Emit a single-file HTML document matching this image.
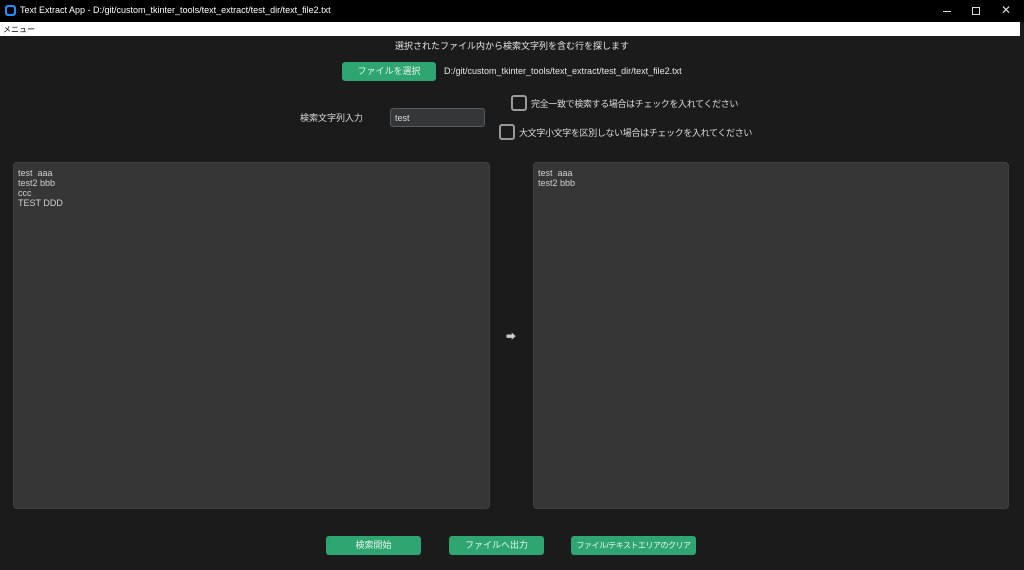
<!DOCTYPE html>
<html><head><meta charset="utf-8"><style>
*{margin:0;padding:0;box-sizing:border-box}
body{width:1024px;height:570px;background:#1b1b1b;position:relative;overflow:hidden;font-family:"Liberation Sans","Noto Sans CJK JP",sans-serif;color:#dcdcdc;font-size:9px}
.a{position:absolute;white-space:nowrap}
.btn{position:absolute;background:#2fa572;border-radius:3px;color:#e8f5ee;font-size:9px;text-align:center;line-height:19px;height:19px;white-space:nowrap;overflow:hidden}
.tb{position:absolute;background:#363636;border-radius:4px;border:1px solid #404040;top:162px;height:347px;padding:5px 4px;font-size:9px;line-height:10px;color:#d0d0d0}
.cb{position:absolute;width:16px;height:16px;border:2px solid #9a9a9a;border-radius:3px}
</style></head><body>
<div class="a" style="left:0;top:0;width:1024px;height:22px;background:#000"></div>
<div class="a" style="left:5px;top:5px;width:11px;height:11px;background:#1f8fff;border-radius:3px"><div style="margin:2px;width:7px;height:7px;background:#000;border-radius:2px"></div></div>
<div class="a" style="left:20px;top:5px;font-size:9px;color:#fff">Text Extract App - D:/git/custom_tkinter_tools/text_extract/test_dir/text_file2.txt</div>
<div class="a" style="left:943px;top:11px;width:8px;height:1px;background:#ddd"></div>
<div class="a" style="left:972px;top:7px;width:8px;height:8px;border:1px solid #ddd"></div>
<div class="a" style="left:1001px;top:3px;color:#ddd;font-size:12px">✕</div>
<div class="a" style="left:0;top:22px;width:1020px;height:14px;background:#fff;color:#000;font-size:8px;padding:2px 0 0 3px">メニュー</div>
<div class="a" style="left:0;top:39px;width:1024px;text-align:center;font-size:9px;color:#e6e6e6">選択されたファイル内から検索文字列を含む行を探します</div>
<div class="btn" style="left:342px;top:62px;width:94px">ファイルを選択</div>
<div class="a" style="left:444px;top:66px;color:#e6e6e6">D:/git/custom_tkinter_tools/text_extract/test_dir/text_file2.txt</div>
<div class="a" style="left:300px;top:111px">検索文字列入力</div>
<div class="a" style="left:390px;top:108px;width:95px;height:19px;background:#343638;border:1px solid #565b5e;border-radius:3px;padding:4px 0 0 4px">test</div>
<div class="cb" style="left:511px;top:95px"></div>
<div class="a" style="left:531px;top:97px;letter-spacing:-0.35px">完全一致で検索する場合はチェックを入れてください</div>
<div class="cb" style="left:499px;top:124px"></div>
<div class="a" style="left:519px;top:126px;letter-spacing:-0.35px">大文字小文字を区別しない場合はチェックを入れてください</div>
<div class="tb" style="left:13px;width:477px">test&nbsp; aaa<br>test2 bbb<br>ccc<br>TEST DDD</div>
<div class="a" style="left:506px;top:328px;color:#ccc;font-size:10px">➡</div>
<div class="tb" style="left:533px;width:476px">test&nbsp; aaa<br>test2 bbb</div>
<div class="btn" style="left:326px;top:536px;width:95px">検索開始</div>
<div class="btn" style="left:449px;top:536px;width:95px">ファイルへ出力</div>
<div class="btn" style="left:571px;top:536px;width:125px;font-size:8px;letter-spacing:-0.5px">ファイル/テキストエリアのクリア</div>
</body></html>
